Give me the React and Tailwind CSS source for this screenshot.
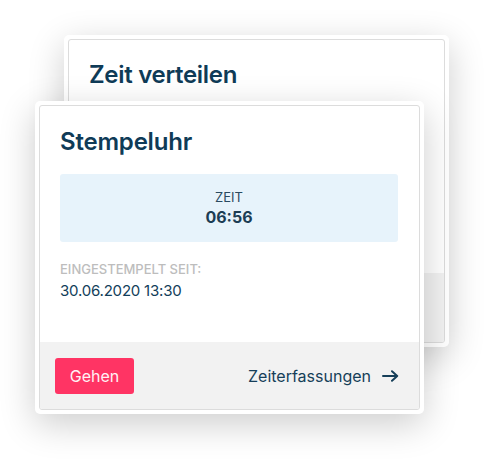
import React from "react";

const font = { fontFamily: "Inter, 'Noto Sans', sans-serif" };

function Card({ children, className = "" }) {
  return (
    <div className={`bg-white rounded-[5px] p-[4px] shadow-[0_10px_36px_rgba(0,0,0,0.2)] ${className}`}>
      <div className="h-full border border-[#dcdcdc] rounded-[3px] flex flex-col overflow-hidden">
        {children}
      </div>
    </div>
  );
}

export default function App() {
  return (
    <div className="w-[494px] h-[460px] bg-white overflow-hidden" style={font}>
      <div className="grid">
        <Card className="col-start-1 row-start-1 ml-[64px] mt-[35px] w-[385px] h-[312px]">
          <div className="flex-1 px-[20px] pt-[19px]">
            <h2 className="text-[24px] leading-[32px] font-semibold text-[#0f3b57] tracking-[-0.3px]">
              Zeit verteilen
            </h2>
          </div>
          <div className="h-[69px] bg-[#f2f2f2]" />
        </Card>
        <Card className="col-start-1 row-start-1 ml-[35px] mt-[101px] w-[389px] h-[313px]">
          <div className="flex-1 px-[20px] pt-[20px]">
            <h2 className="text-[24px] leading-[32px] font-semibold text-[#0f3b57] tracking-[-0.2px]">
              Stempeluhr
            </h2>
            <div className="mt-[16px] h-[68px] w-[338px] bg-[#e7f3fb] rounded-[3px] flex flex-col items-center justify-center">
              <div className="text-[13px] leading-[16px] text-[#2a4a60]">ZEIT</div>
              <div className="text-[16px] leading-[20px] font-bold text-[#1c3d54] mt-[2px]">06:56</div>
            </div>
            <div className="mt-[19px] text-[13px] leading-[16px] font-medium text-[#bdbdbd] uppercase">
              Eingestempelt seit:
            </div>
            <div className="mt-[3px] text-[15px] leading-[22px] text-[#123e5a] tracking-[-0.2px]">30.06.2020 13:30</div>
          </div>
          <div className="h-[67px] bg-[#f2f2f2] flex items-center justify-between pl-[15px] pr-[20px]">
            <button className="h-[36px] w-[79px] rounded-[3px] bg-[#ff3464] text-[#fff1f4] text-[16px] leading-none">
              Gehen
            </button>
            <div className="flex items-center gap-[11px] text-[#163f59] text-[16px] leading-none">
              <span>Zeiterfassungen</span>
              <svg width="17" height="12" viewBox="0 0 17 12" fill="none">
                <path d="M1 6h14M10 1.2L15.2 6 10 10.8" stroke="#163f59" strokeWidth="2" strokeLinecap="round" strokeLinejoin="round" />
              </svg>
            </div>
          </div>
        </Card>
      </div>
    </div>
  );
}
